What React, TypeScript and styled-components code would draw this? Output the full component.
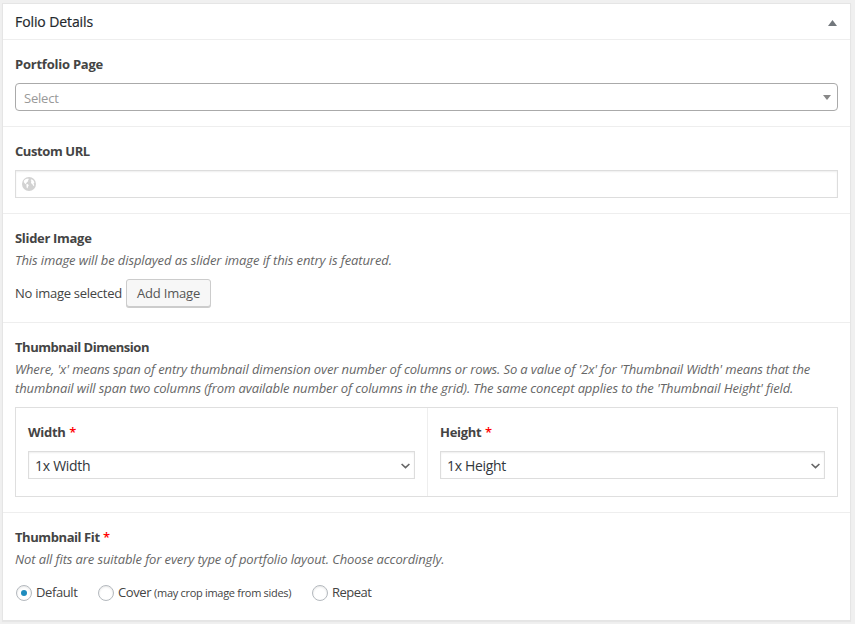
import React, { useState } from 'react';
import styled, { createGlobalStyle } from 'styled-components';

const GlobalStyle = createGlobalStyle`
  *, *::before, *::after { box-sizing: border-box; }
  body {
    margin: 0;
    background: #f0f0f0;
    color: #444;
    font: 13px/18px 'Open Sans', 'Noto Sans', sans-serif;
  }
`;

const Page = styled.main`
  width: 855px;
  height: 624px;
  padding: 3px 4px 3px 2px;
`;

const MetaBox = styled.section`
  height: 618px;
  background: #fff;
  border: 1px solid #e5e5e5;
  box-shadow: 0 1px 1px rgba(0, 0, 0, 0.04);
`;

const Header = styled.header`
  display: flex;
  align-items: center;
  justify-content: space-between;
  height: 36px;
  padding: 0 13px 0 12px;
  border-bottom: 1px solid #eee;
`;

const Title = styled.h2`
  margin: 0;
  font-size: 14px;
  font-weight: 500;
  line-height: 20px;
  letter-spacing: -0.1px;
  color: #23282d;
  -webkit-text-stroke: 0.2px #23282d;
`;

const ToggleIcon = styled.svg`
  display: block;
  width: 9px;
  height: 6px;
  margin-top: 2px;
  fill: #72777c;
`;

const Field = styled.div`
  padding: 15px 12px;
  & + & { border-top: 1px solid #eee; }
`;

const Spaced = styled.span<{ $track?: number }>`
  letter-spacing: ${({ $track = 0 }) => $track}px;
`;

const Label = styled.div<{ $track: number }>`
  height: 18px;
  font-weight: 700;
  letter-spacing: ${({ $track }) => $track}px;
  white-space: nowrap;
`;

const Required = styled.span`
  margin-left: 0.5px;
  font-weight: 600;
  color: #f00;
`;

const Description = styled.p<{ $track: number }>`
  margin: 4px 0 -1px;
  font-style: italic;
  line-height: 19px;
  color: #666;
  letter-spacing: ${({ $track }) => $track}px;
  white-space: nowrap;
`;

const DescriptionLine = styled.span<{ $track?: number }>`
  display: block;
  letter-spacing: ${({ $track }) => $track}px;
`;

const Picker = styled.div`
  display: flex;
  align-items: center;
  justify-content: space-between;
  height: 28px;
  margin-top: 10px;
  padding: 2px 6px 0 8px;
  border: 1px solid #aaa;
  border-radius: 4px;
  color: #999;
`;

const PickerArrow = styled.svg`
  display: block;
  width: 8px;
  height: 5px;
  margin-top: -1px;
  fill: #888;
`;

const UrlBox = styled.label`
  display: flex;
  align-items: center;
  gap: 6px;
  height: 28px;
  margin-top: 10px;
  padding: 0 6px;
  border: 1px solid #ddd;
  box-shadow: inset 0 1px 2px rgba(0, 0, 0, 0.07);
`;

const UrlInput = styled.input`
  flex: 1;
  min-width: 0;
  border: 0;
  outline: 0;
  background: transparent;
  font: inherit;
`;

const Globe = styled.svg`
  width: 14px;
  height: 14px;
`;

const ImageRow = styled.div`
  display: flex;
  align-items: center;
  height: 28px;
  margin-top: 10px;
`;

const ImageStatus = styled.span`
  width: 111px;
  letter-spacing: -0.27px;
  white-space: nowrap;
`;

const Button = styled.button`
  width: 85px;
  height: 28px;
  padding: 0 0 1px;
  border: 1px solid #ccc;
  border-radius: 3px;
  background: #f7f7f7;
  box-shadow: 0 1px 0 #ccc;
  color: #555;
  font: inherit;
  letter-spacing: -0.19px;
`;

const Columns = styled.div`
  display: grid;
  grid-template-columns: 411px 1fr;
  height: 90px;
  margin-top: 10px;
  border: 1px solid #dfdfdf;
`;

const Column = styled.div`
  padding: 15px 12px;
  & + & { border-left: 1px solid #eee; }
`;

const SelectBox = styled.div<{ $track: number }>`
  display: flex;
  align-items: center;
  justify-content: space-between;
  height: 28px;
  margin-top: 10px;
  padding: 2px 4px 0 6px;
  border: 1px solid #ddd;
  box-shadow: inset 0 1px 2px rgba(0, 0, 0, 0.07);
  color: #32373c;
  font-size: 14px;
  letter-spacing: ${({ $track }) => $track}px;
`;

const Chevron = styled.svg`
  display: block;
  width: 9px;
  height: 6px;
  margin-top: -1px;
  fill: none;
  stroke: #666;
  stroke-width: 1.6;
`;

const RadioGroup = styled.div`
  display: flex;
  height: 18px;
  margin: 16px 0 0 1px;
`;

const RadioOption = styled.label<{ $width: number }>`
  display: flex;
  align-items: center;
  gap: 4px;
  width: ${({ $width }) => $width}px;
  white-space: nowrap;
`;

const RadioText = styled(Spaced)`
  padding-bottom: 2px;
`;

const Radio = styled.input`
  appearance: none;
  display: grid;
  place-items: center;
  flex: none;
  width: 16px;
  height: 16px;
  margin: 0;
  border: 1px solid #b4b9be;
  border-radius: 50%;
  background: #fff;
  box-shadow: inset 0 1px 2px rgba(0, 0, 0, 0.1);
  &:checked::before {
    content: '';
    width: 6px;
    height: 6px;
    border-radius: 50%;
    background: #1e8cbe;
  }
`;

const Hint = styled.small`
  font-size: 11px;
  letter-spacing: -0.3px;
`;

const ChevronIcon = () => (
  <Chevron viewBox="0 0 9 6"><path d="M.6 1 4.5 4.7 8.4 1" /></Chevron>
);

export default function App() {
  const [fit, setFit] = useState('default');
  const radio = (value: string) => ({
    type: 'radio', name: 'fit', value, checked: fit === value, onChange: () => setFit(value),
  });

  return (
    <>
      <GlobalStyle />
      <Page>
        <MetaBox>
          <Header>
            <Title>Folio Details</Title>
            <ToggleIcon viewBox="0 0 9 6"><path d="M4.5 0 9 6H0z" /></ToggleIcon>
          </Header>

          <Field>
            <Label $track={-0.23}>Portfolio Page</Label>
            <Picker>
              <Spaced $track={-0.2}>Select</Spaced>
              <PickerArrow viewBox="0 0 8 5"><path d="M0 0h8L4 5z" /></PickerArrow>
            </Picker>
          </Field>

          <Field>
            <Label $track={-0.41}>Custom URL</Label>
            <UrlBox>
              <Globe viewBox="0 0 14 14">
                <circle cx="7" cy="7" r="7" fill="#d2d2d2" />
                <path fill="#fff" d="M2 3.6 3.8 1.9 6.3 1.5 6.8 2.4 5.9 3.3 6.4 4.1 5.2 5.1 4.3 6 3.9 7.2 2.6 6.3 1.8 5z" />
                <path fill="#fff" d="M4.3 7.2 5.6 7 6.8 8.2 6.1 9.6 5.4 11.4 4.7 10.8z" />
                <path fill="#fff" d="M8.5 3.1 9.8 2.3 11.4 3.5 12.4 5.4 11.6 6.3 12.2 8.2 11.4 9.2 10.6 7.4 9.4 6.4 8.9 5 9.5 4.1z" />
              </Globe>
              <UrlInput aria-label="Custom URL" />
            </UrlBox>
          </Field>

          <Field>
            <Label $track={-0.31}>Slider Image</Label>
            <Description $track={-0.1}>
              This image will be displayed as slider image if this entry is featured.
            </Description>
            <ImageRow>
              <ImageStatus>No image selected</ImageStatus>
              <Button type="button">Add Image</Button>
            </ImageRow>
          </Field>

          <Field>
            <Label $track={-0.47}>Thumbnail Dimension</Label>
            <Description $track={-0.12}>
              <DescriptionLine $track={-0.12}>
                Where, 'x' means span of entry thumbnail dimension over number of columns or rows. So a value of '2x' for 'Thumbnail Width' means that the
              </DescriptionLine>
              <DescriptionLine $track={-0.11}>
                thumbnail will span two columns (from available number of columns in the grid). The same concept applies to the 'Thumbnail Height' field.
              </DescriptionLine>
            </Description>
            <Columns>
              <Column>
                <Label $track={-0.27}>Width <Required>*</Required></Label>
                <SelectBox $track={-0.28}>1x Width<ChevronIcon /></SelectBox>
              </Column>
              <Column>
                <Label $track={-0.3}>Height <Required>*</Required></Label>
                <SelectBox $track={-0.33}>1x Height<ChevronIcon /></SelectBox>
              </Column>
            </Columns>
          </Field>

          <Field>
            <Label $track={-0.42}>Thumbnail Fit <Required>*</Required></Label>
            <Description $track={-0.11}>
              Not all fits are suitable for every type of portfolio layout. Choose accordingly.
            </Description>
            <RadioGroup>
              <RadioOption $width={82}>
                <Radio {...radio('default')} /><RadioText $track={-0.39}>Default</RadioText>
              </RadioOption>
              <RadioOption $width={214}>
                <Radio {...radio('cover')} />
                <RadioText $track={-0.4}>Cover <Hint>(may crop image from sides)</Hint></RadioText>
              </RadioOption>
              <RadioOption $width={70}>
                <Radio {...radio('repeat')} /><RadioText $track={-0.5}>Repeat</RadioText>
              </RadioOption>
            </RadioGroup>
          </Field>
        </MetaBox>
      </Page>
    </>
  );
}
